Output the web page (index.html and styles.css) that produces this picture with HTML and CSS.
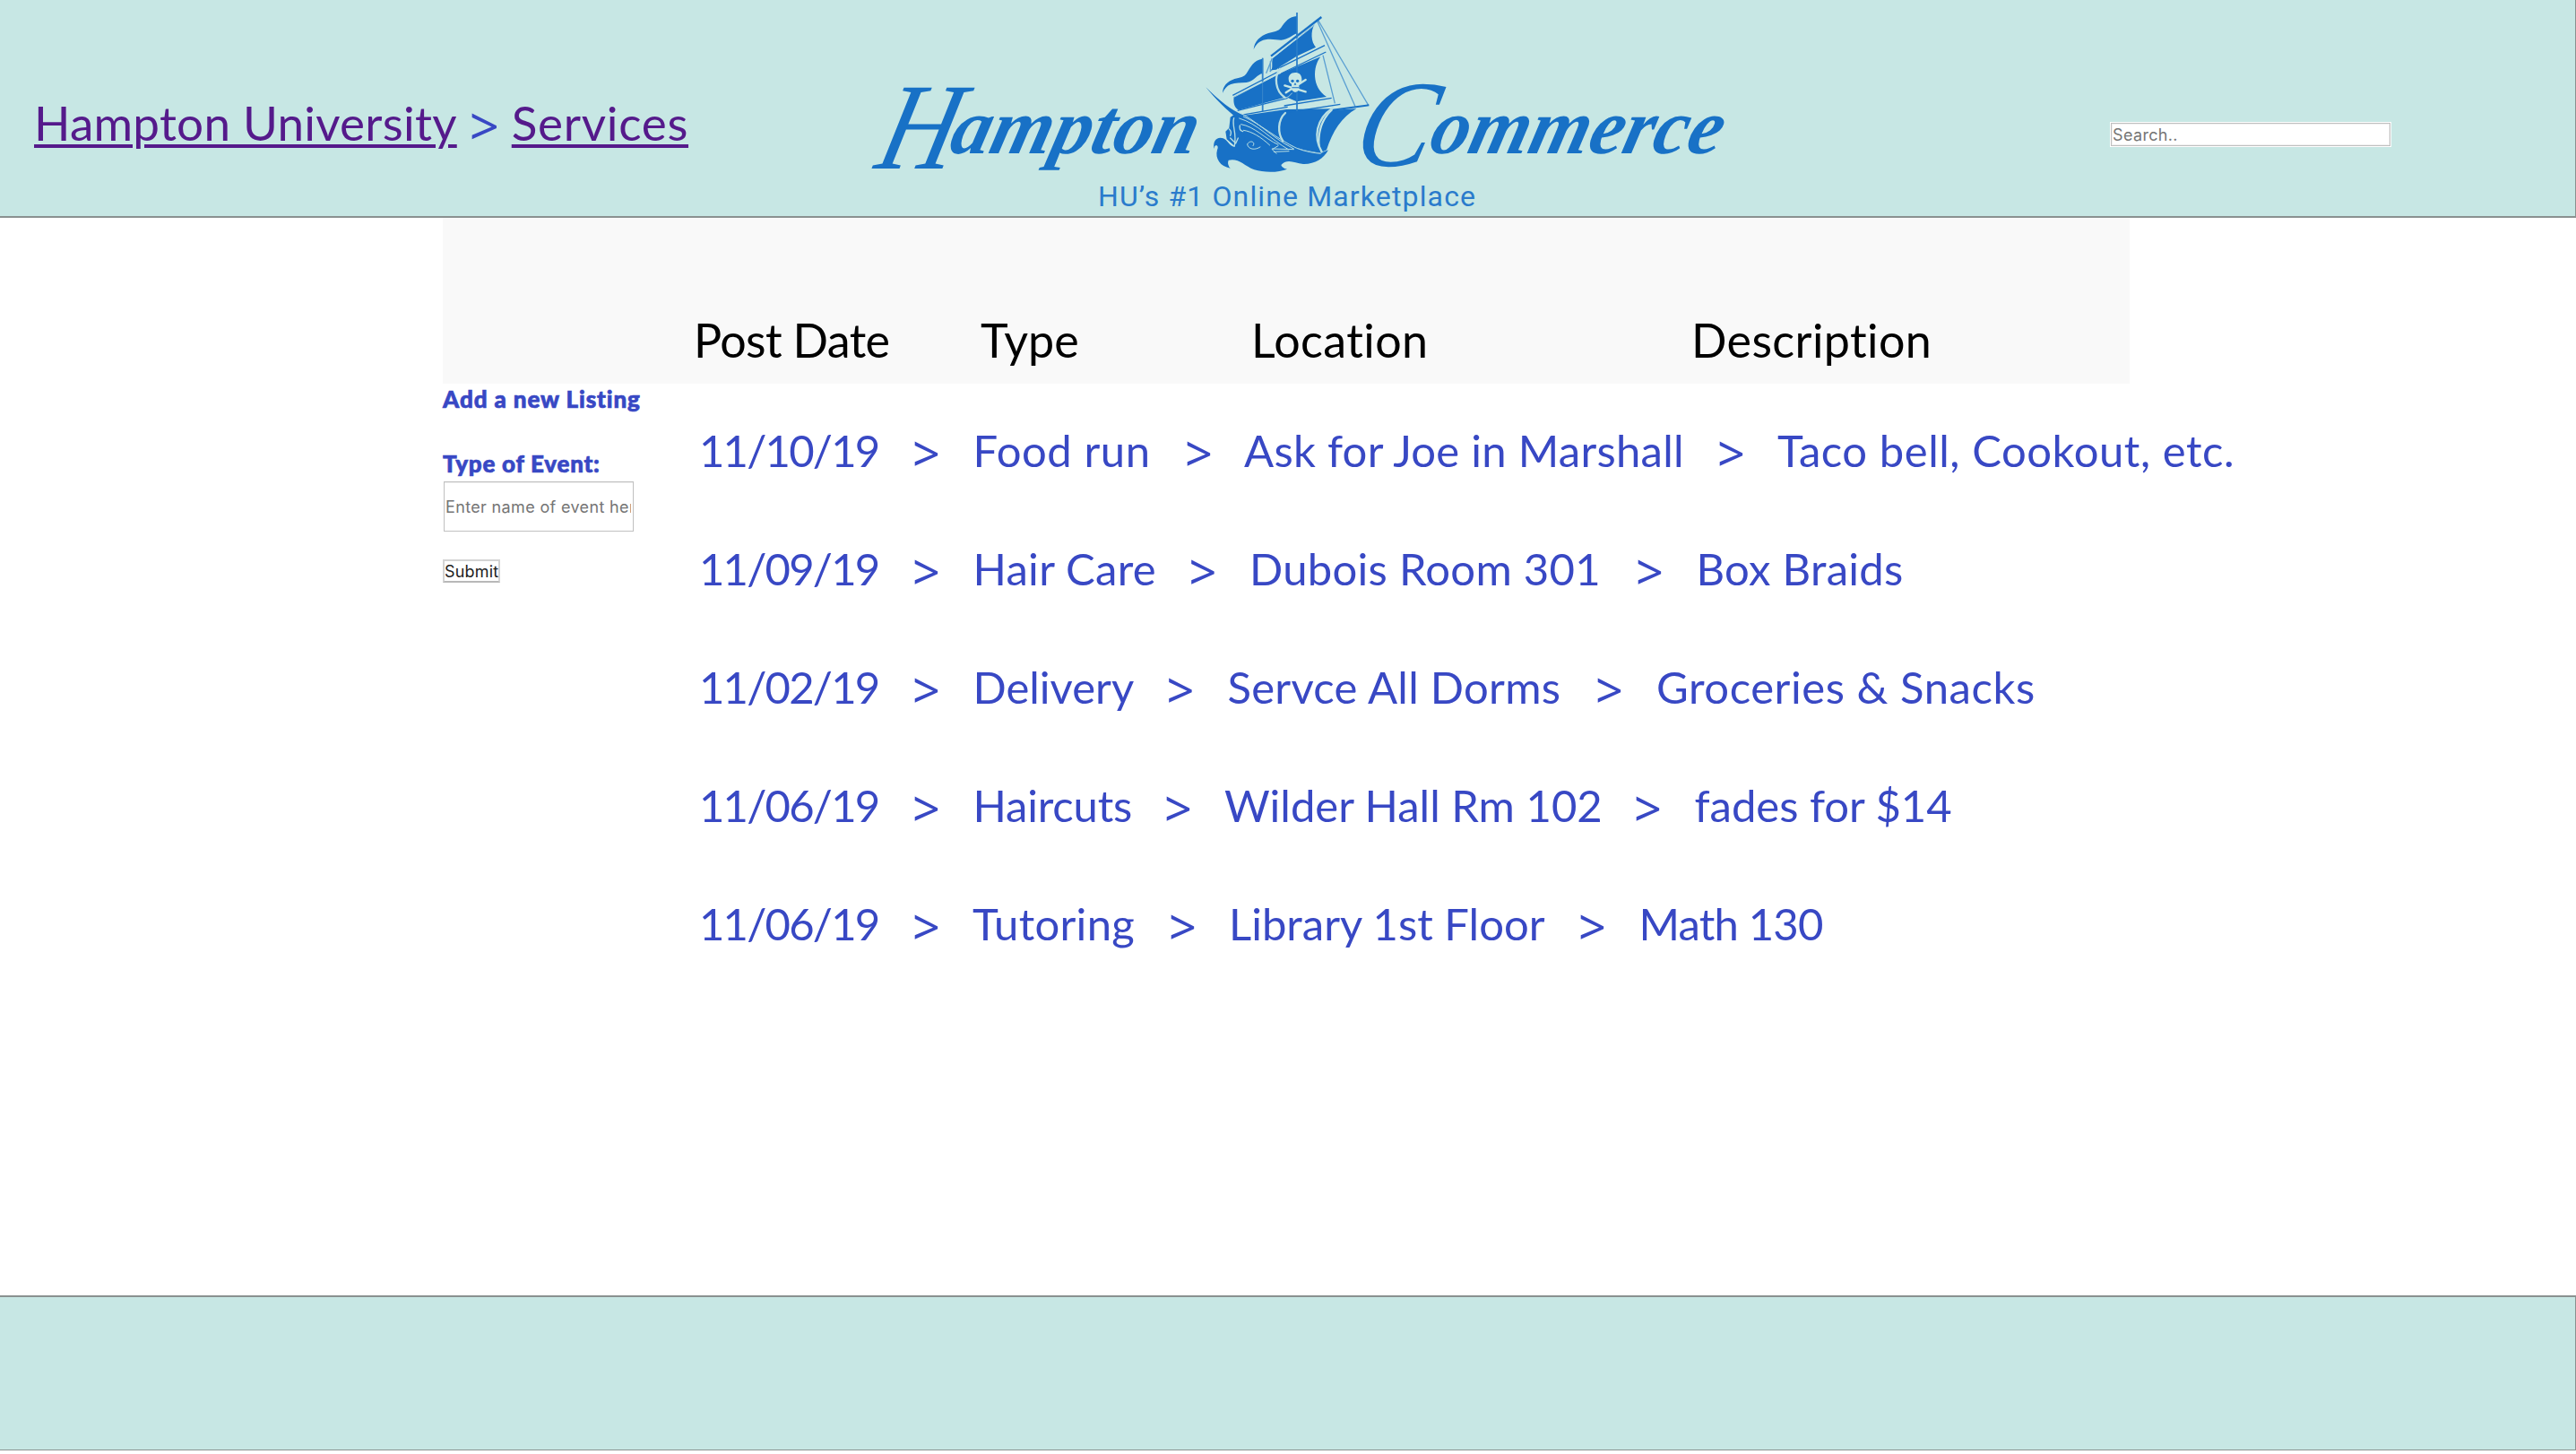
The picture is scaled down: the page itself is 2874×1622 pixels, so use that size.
FILE: index.html
```html
<!DOCTYPE html>
<html lang="en">
<head>
<meta charset="utf-8">
<title>Hampton Commerce - Services</title>
<link rel="stylesheet" href="styles.css">
</head>
<body>
<header class="site-header">
  <nav class="breadcrumb">
    <a class="crumb" href="#">Hampton University</a>
    <span class="crumb-sep">&gt;</span>
    <a class="crumb crumb-current" href="#">Services</a>
  </nav>
  <svg class="logo" width="1000" height="241" viewBox="0 0 1000 241" role="img" aria-label="Hampton Commerce">
    <g class="script" transform="translate(0 171) skewX(-14)">
      <text><tspan class="script-cap" x="28" y="17" textLength="86" lengthAdjust="spacingAndGlyphs">H</tspan><tspan x="107" y="0" textLength="274" lengthAdjust="spacingAndGlyphs">ampton</tspan></text>
      <text><tspan class="script-cap" x="560" y="14" textLength="84" lengthAdjust="spacingAndGlyphs">C</tspan><tspan x="642" y="0" textLength="325" lengthAdjust="spacingAndGlyphs">ommerce</tspan></text>
    </g>
    <g transform="translate(350 0) scale(.33333)">
      <g class="rope">
        <path d="M508 68L636 356M511 66L680 352M528 185L568 346M358 195L338 245M375 215L350 240M352 205V240"/>
      </g>
      <g class="solid">
        <path d="M441 54V112C425 116 412 134 388 134C372 134 355 129 335 133C315 137 304 148 296 166C298 138 318 120 345 111C362 106 378 106 388 92C402 72 414 56 441 54Z"/>
        <path d="M326 197V246C308 248 298 272 272 276C252 278 235 276 220 282C206 287 198 298 192 312C192 288 208 272 232 264C250 259 264 258 272 246C286 224 296 200 326 197Z"/>
        <path d="M361 194L500 82C486 105 488 140 504 158L440 188L386 222L372 233L355 235C362 222 354 208 361 194Z"/>
        <path d="M230 324L378 250L520 190C494 222 490 292 540 324L440 340L405 325L245 368C229 358 228 340 230 324Z"/>
        <path d="M256 388L405 366L560 364C520 396 500 450 522 512C470 505 420 492 380 470C330 438 300 408 256 388Z"/>
        <path d="M562 368L640 364C590 392 560 440 540 502L522 510C510 460 522 402 562 368Z"/>
        <path d="M136 292C180 336 220 368 262 386C310 410 350 452 398 478C430 494 480 510 520 512L546 502C530 532 500 550 462 549C432 547 412 528 388 552Q390 562 408 566C380 578 330 578 298 568C262 552 244 528 212 536Q206 550 218 563C184 558 166 530 174 502Q180 488 170 486Q164 488 164 498C158 474 172 456 194 463C210 470 214 488 232 492C242 482 234 466 256 460C240 440 244 420 248 402C206 370 165 328 136 292Z"/>
        <path d="M218 392L230 384L262 410L258 440L268 462L236 492L206 466L202 440L214 428Z"/>
      </g>
      <g class="spar">
        <path d="M441 42V372M326 194V372" stroke-width="5"/>
        <path d="M354 188L523 57" stroke-width="7"/>
        <path d="M378 229L534 152M388 246L538 174" stroke-width="4"/>
        <path d="M226 319L378 240" stroke-width="4"/>
        <path d="M242 370L410 328M398 354L557 328M250 386L410 358M398 378L586 349" stroke-width="4"/>
        <path d="M560 368L682 352" stroke-width="6"/>
        <path d="M441 42V372M326 194V372" class="mast"/>
      </g>
      <g class="cut">
        <path d="M384 230C364 258 368 304 400 326" stroke-width="7"/>
        <path d="M402 378C376 402 376 446 394 472" stroke-width="7"/>
        <path d="M560 362C504 398 496 460 524 508" stroke-width="7"/>
        <path d="M232 324L380 247M364 190L500 84M402 328C410 326 418 320 424 312" stroke-width="2.5"/>
        <path d="M242 374C300 398 350 456 430 498M248 396C310 414 352 466 412 500M254 416C300 424 330 462 378 484M262 436C290 440 320 458 350 486M262 390C320 416 370 462 440 496C470 508 500 512 520 514" stroke-width="3"/>
        <path d="M275 482C285 466 304 476 294 488M275 484C278 500 300 504 318 492M358 498L430 500M364 508L414 506M372 514L358 500L378 488" stroke-width="3"/>
        <path d="M230 395C222 420 240 440 232 488M214 432Q224 440 218 454M250 420Q246 436 260 440M218 462L230 474M244 462L236 480" stroke-width="4"/>
      </g>
      <g class="bone">
        <path d="M400 286L470 307M470 267L404 310"/>
        <path d="M435 243C420 243 412 253 413 265C413 275 418 279 423 281V300Q435 318 448 300V281C454 278 458 272 457 263C456 251 449 243 435 243Z"/>
        <g class="solid"><circle cx="426" cy="271" r="5"/><circle cx="443" cy="271" r="5"/><path d="M435 276L431 284H439ZM424 292H447V295H424Z"/></g>
      </g>
    </g>
    <text class="tagline" x="275" y="230" textLength="421">HU’s #1 Online Marketplace</text>
  </svg>
  <input class="search" type="text" placeholder="Search..">
</header>

<main class="content">
  <div class="table-head">
    <span class="head-date">Post Date</span>
    <span>Type</span>
    <span class="head-wide">Location</span>
    <span class="head-wide">Description</span>
  </div>
  <div class="columns">
    <form class="listing-form">
      <h2 class="form-title">Add a new Listing</h2>
      <label class="form-title form-label" for="event">Type of Event:</label>
      <input class="event-input" id="event" type="text" placeholder="Enter name of event here">
      <button class="submit" type="button">Submit</button>
    </form>
    <div class="listings">
      <div class="row row-food">
        <span class="date">11/10/19</span><span class="sep">&gt;</span>
        <span class="loose">Food run</span><span class="sep">&gt;</span>
        <span class="wide">Ask for Joe in Marshall</span><span class="sep">&gt;</span>
        <span class="loose">Taco bell, Cookout, etc.</span>
      </div>
      <div class="row row-hair">
        <span class="date">11/09/19</span><span class="sep">&gt;</span>
        <span class="wide">Hair Care</span><span class="sep">&gt;</span>
        <span class="wide">Dubois Room 301</span><span class="sep">&gt;</span>
        <span class="wide">Box Braids</span>
      </div>
      <div class="row row-delivery">
        <span class="date">11/02/19</span><span class="sep">&gt;</span>
        <span>Delivery</span><span class="sep">&gt;</span>
        <span class="wide">Servce All Dorms</span><span class="sep">&gt;</span>
        <span class="loose">Groceries &amp; Snacks</span>
      </div>
      <div class="row row-cuts">
        <span class="date">11/06/19</span><span class="sep">&gt;</span>
        <span class="snug">Haircuts</span><span class="sep">&gt;</span>
        <span>Wilder Hall Rm 102</span><span class="sep">&gt;</span>
        <span>fades for $14</span>
      </div>
      <div class="row row-tutor">
        <span class="date">11/06/19</span><span class="sep">&gt;</span>
        <span class="wide">Tutoring</span><span class="sep">&gt;</span>
        <span>Library 1st Floor</span><span class="sep">&gt;</span>
        <span class="tight">Math 130</span>
      </div>
    </div>
  </div>
</main>
<footer class="site-footer"></footer>
</body>
</html>
```
FILE: styles.css
```css
* { box-sizing: border-box; }

body {
  margin: 0;
  height: 1622px;
  display: flex;
  flex-direction: column;
  background: #fff;
  color: #3848c4;
  font-family: Lato, "Open Sans", sans-serif;
  overflow: hidden;
}

/* header */
.site-header {
  height: 243px;
  flex: none;
  display: grid;
  grid-template-columns: 912px 1404px 314px;
  background: #c7e7e4;
  border-bottom: 2px solid #8a9190;
  border-right: 1px solid #8a9190;
  padding-left: 38px;
}
.breadcrumb {
  display: flex;
  align-items: flex-start;
  padding-top: 105px;
  font-size: 53px;
  line-height: 64px;
  white-space: nowrap;
}
.crumb {
  color: #551a8b;
  letter-spacing: .25px;
  text-decoration: underline;
  text-decoration-thickness: 4px;
  text-underline-offset: 4px;
}
.crumb-current { letter-spacing: .7px; }
.crumb-sep {
  width: 61px;
  padding: 3px 0 0 14px;
  font-family: "Noto Sans", sans-serif;
  font-size: 58px;
}
.logo { display: block; }
.script {
  fill: #1871c6;
  font: italic 700 88px "Liberation Serif", serif;
}
.script-cap { font-size: 138px; font-weight: 400; }
.tagline { fill: #2a7bcc; font: 32px Roboto, sans-serif; }
.solid { fill: #1871c6; }
.rope { fill: none; stroke: #5a9fd2; stroke-width: 4; }
.spar { fill: none; stroke: #1871c6; }
.mast { stroke: #5a9fd2; stroke-width: 1.5; }
.cut { fill: none; stroke: #b9dfe3; stroke-linecap: round; }
.bone { fill: #c7e7e4; }
.bone > path:first-child { stroke: #c7e7e4; stroke-width: 7; stroke-linecap: round; }

input, button { font-family: Inter, sans-serif; font-size: 18px; letter-spacing: .35px; border-radius: 0; margin: 0; }
input::placeholder { color: #757575; opacity: 1; }
.search {
  height: 26px;
  margin: 137px 1px 0;
  padding: 0 1px;
  border: 1px solid #c0c0c0;
  outline: 1px solid #fff;
  background: #fff;
  box-shadow: inset 0 0 0 1px #f0f0f0;
}

/* listings */
.content { flex: none; height: 1202px; padding-left: 494px; }
.table-head {
  width: 1882px;
  height: 185px;
  padding: 105px 0 0 280px;
  display: grid;
  grid-template-columns: 320px 302px 491px auto;
  background: #f9f9f9;
  color: #000;
  font-size: 52px;
  line-height: 62px;
}
.head-date { letter-spacing: -.65px; }
.head-wide { letter-spacing: .4px; }
.columns { display: flex; }
.listing-form {
  width: 286px;
  display: flex;
  flex-direction: column;
  align-items: flex-start;
}
.form-title {
  margin: 0;
  font-size: 26px;
  font-weight: 900;
  line-height: 34px;
  letter-spacing: .9px;
  white-space: nowrap;
  -webkit-text-stroke: .7px #3848c4;
}
.form-label { margin-top: 38px; letter-spacing: .75px; }
.event-input {
  width: 212px;
  height: 56px;
  margin: 3px 0 0 1px;
  padding: 0 2px 0 1px;
  border: 1px solid #c0c0c0;
  box-shadow: inset 0 1px #eee;
}
.submit {
  width: 64px;
  height: 26px;
  margin-top: 31px;
  padding: 1px 0 0;
  border: 2px solid #d4d4d4;
  border-bottom-color: #b8b8b8;
  background: #fff;
  color: #222;
  line-height: 21px;
  letter-spacing: .2px;
  white-space: nowrap;
}
.listings { padding-top: 8px; font-size: 49px; line-height: 132px; white-space: nowrap; }
.row { display: grid; height: 132px; }
.row-food { grid-template-columns: 238px 67.5px 236.5px 66px 528px 67px auto; }
.row-hair { grid-template-columns: 238px 67.5px 241px 67.5px 431px 67.5px auto; }
.row-delivery { grid-template-columns: 238px 67.5px 216px 68px 410.5px 68px auto; }
.row-cuts { grid-template-columns: 238px 67.5px 213.5px 67px 457px 67.5px auto; }
.row-tutor { grid-template-columns: 238px 67px 219px 67px 390px 67.5px auto; }
.date { letter-spacing: -1.8px; }
.tight { letter-spacing: -.8px; }
.snug { letter-spacing: -.2px; }
.wide { letter-spacing: .28px; }
.loose { letter-spacing: .55px; }
.sep { padding-top: 3px; font-family: "Noto Sans", sans-serif; font-size: 54px; }

/* footer */
.site-footer {
  flex: none;
  height: 173px;
  background: #c7e7e4;
  border: solid #8a9190;
  border-width: 2px 1px 1px 0;
}
```
